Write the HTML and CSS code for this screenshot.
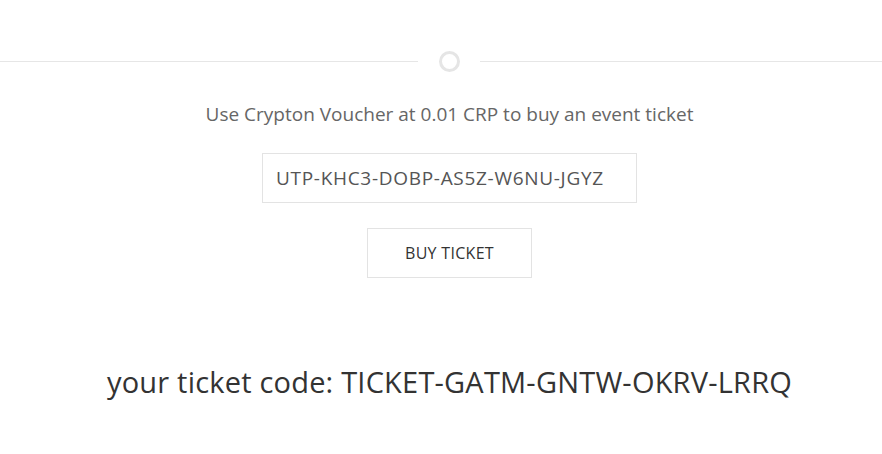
FILE: index.html
```html
<!DOCTYPE html>
<html>
<head>
<meta charset="utf-8">
<link rel="stylesheet" href="styles.css">
</head>
<body>
<div class="page">
  <div class="divider">
    <span class="line"></span>
    <span class="ring"></span>
    <span class="line"></span>
  </div>
  <p class="intro">Use Crypton Voucher at 0.01 CRP to buy an event ticket</p>
  <div class="field">UTP-KHC3-DOBP-AS5Z-W6NU-JGYZ</div>
  <button class="buy">BUY TICKET</button>
  <p class="code">your ticket code: TICKET-GATM-GNTW-OKRV-LRRQ</p>
</div>
</body>
</html>
```
FILE: styles.css
```css
html, body {
  margin: 0;
  padding: 0;
  background: #fff;
}
.page {
  font-family: "Open Sans", "Noto Sans", sans-serif;
  display: flex;
  flex-direction: column;
  align-items: center;
  padding-top: 51px;
  padding-left: 17px;
}
.divider {
  align-self: stretch;
  margin-left: -17px;
  display: flex;
  align-items: center;
  gap: 21px;
}
.line {
  height: 1px;
  background: #e6e6e6;
}
.line:first-child {
  width: 418px;
}
.line:last-child {
  flex: 1;
  margin-left: -1px;
}
.ring {
  width: 15px;
  height: 15px;
  border: 3px solid #e5e5e5;
  border-radius: 50%;
}
.intro {
  margin: 29px 0 0;
  font-size: 19px;
  line-height: 26px;
  color: #666;
}
.field {
  margin-top: 26px;
  width: 375px;
  height: 50px;
  box-sizing: border-box;
  border: 1px solid #e3e3e3;
  padding: 0 13px;
  display: flex;
  align-items: center;
  font-size: 19px;
  letter-spacing: 0.7px;
  color: #555;
}
.buy {
  margin-top: 25px;
  width: 165px;
  height: 50px;
  box-sizing: border-box;
  border: 1px solid #e3e3e3;
  background: #fff;
  font-family: inherit;
  font-size: 16px;
  letter-spacing: 0.3px;
  color: #333;
  padding: 0;
}
.code {
  margin: 84px 0 0;
  font-size: 29px;
  letter-spacing: 0.2px;
  line-height: 40px;
  color: #333;
}
```
